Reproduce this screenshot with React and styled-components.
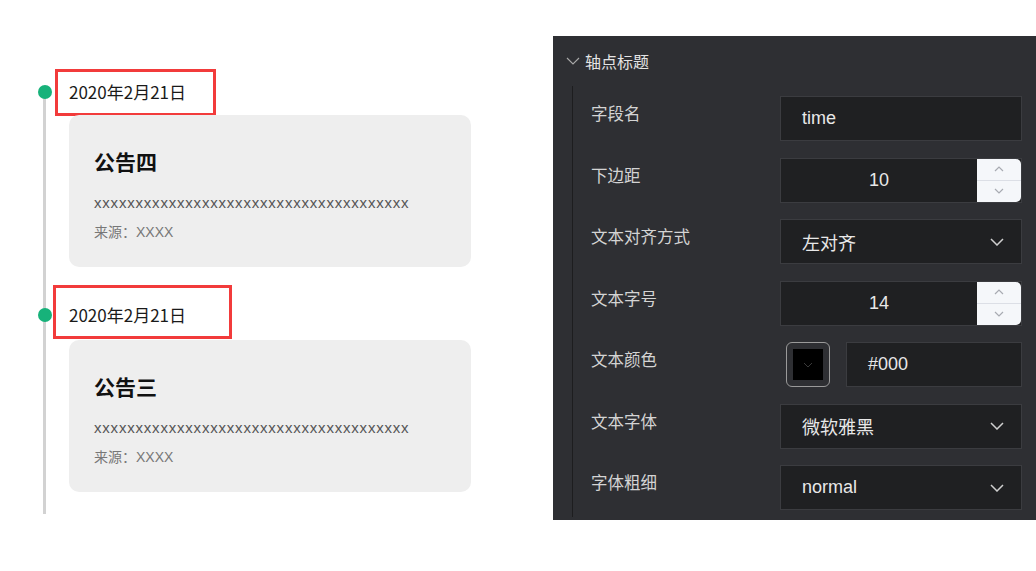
import React from 'react'
import styled, { createGlobalStyle } from 'styled-components'

const GlobalStyle = createGlobalStyle`
  body {
    margin: 0;
    background: #fff;
    font-family: "Noto Sans CJK SC", "Microsoft YaHei", sans-serif;
  }
`

const Page = styled.div`
  display: flex;
  width: 1036px;
  height: 571px;
  overflow: hidden;
`

const Timeline = styled.div`
  position: relative;
  align-self: flex-start;
  width: 515px;
  padding: 69px 0 22px 38px;
  display: flex;
  flex-direction: column;
  gap: 18px;

  &::before {
    content: '';
    position: absolute;
    left: 43px;
    top: 91px;
    bottom: 0;
    width: 3px;
    background: #d2d2d2;
  }
`

const Item = styled.div`
  display: flex;
  flex-direction: column;
`

const DateRow = styled.div`
  display: flex;
  align-items: flex-start;
`

const Dot = styled.span`
  position: relative;
  flex: none;
  width: 14px;
  height: 14px;
  border-radius: 50%;
  background: #17b27a;
  margin-top: ${(p) => p.$top}px;
`

const DateBox = styled.div`
  box-sizing: border-box;
  width: ${(p) => p.$w}px;
  height: ${(p) => p.$h}px;
  margin-left: ${(p) => p.$ml}px;
  padding: ${(p) => p.$pt}px 0 0 ${(p) => p.$pl}px;
  border: 3px solid #f23b3b;
  font-size: 17px;
  line-height: 24px;
  color: #1a1a1a;
`

const Card = styled.div`
  box-sizing: border-box;
  width: 402px;
  height: 152px;
  margin: ${(p) => p.$mt}px 0 0 31px;
  padding: 31px 25px 0;
  border-radius: 10px;
  background: #eeeeee;
`

const CardTitle = styled.div`
  font-size: 21px;
  font-weight: 700;
  line-height: 30px;
  color: #111;
`

const CardText = styled.div`
  margin-top: 17px;
  font-family: "Liberation Sans", Arial, sans-serif;
  font-size: 15px;
  letter-spacing: 0.8px;
  line-height: 20px;
  color: #555;
`

const CardSource = styled.div`
  margin-top: 9px;
  font-family: "Liberation Sans", "Noto Sans CJK SC", sans-serif;
  font-size: 14px;
  line-height: 20px;
  color: #777;
`

const Panel = styled.div`
  margin-top: 36px;
  width: 483px;
  height: 484px;
  background: #2e2f33;
  display: flex;
  flex-direction: column;
`

const PanelHeader = styled.div`
  height: 50px;
  flex: none;
  display: flex;
  align-items: center;
  gap: 5px;
  padding-left: 13px;
  font-size: 16px;
  color: #e4e4e4;
`

const PanelBody = styled.div`
  flex: 1;
  margin: 0 0 3px 19px;
  border-left: 1px solid #1d1d1f;
  padding: 10px 14px 0 18px;
  display: flex;
  flex-direction: column;
  gap: 16.5px;
`

const Row = styled.div`
  display: flex;
  align-items: flex-start;
  height: 45px;
`

const Label = styled.div`
  width: 189px;
  padding-top: 5px;
  font-size: 16.5px;
  line-height: 24px;
  color: #d4d4d4;
`

const Field = styled.div`
  box-sizing: border-box;
  display: flex;
  align-items: center;
  width: ${(p) => p.$w || 242}px;
  height: 45px;
  padding-left: ${(p) => (p.$center ? 0 : 21)}px;
  border: 1px solid #3b3c40;
  background: #1f2022;
  font-family: "Liberation Sans", "Noto Sans CJK SC", Arial, sans-serif;
  font-size: 18px;
  color: #e8e8e8;
`

const FieldValue = styled.span`
  flex: 1;
  text-align: ${(p) => (p.$center ? 'center' : 'left')};
`

const SelectValue = styled.span`
  flex: 1;
  font-family: ${(p) => (p.$cjk ? '"Noto Sans CJK SC", sans-serif' : 'inherit')};
`

const Chevron = styled.span`
  flex: none;
  margin-right: 17px;
`

const Stepper = styled.div`
  flex: none;
  align-self: stretch;
  width: 44px;
  display: flex;
  flex-direction: column;
  background: #f5f7fa;
  border-radius: 0 5px 5px 0;
`

const StepButton = styled.div`
  flex: 1;
  display: flex;
  align-items: center;
  justify-content: center;
  & + & {
    border-top: 1px solid #dcdfe6;
  }
`

const ColorRow = styled.div`
  display: flex;
  gap: 16px;
  padding-left: 6px;
`

const Swatch = styled.div`
  box-sizing: border-box;
  width: 44px;
  height: 45px;
  padding: 6px;
  border: 1px solid #9a9a9a;
  border-radius: 6px;
`

const SwatchInner = styled.div`
  height: 100%;
  background: #000;
  display: flex;
  align-items: center;
  justify-content: center;
`

const Down = ({ w = 14, h = 8, color = '#cfcfcf', sw = 1.5 }) => (
  <svg width={w} height={h} viewBox={`0 0 ${w} ${h}`} style={{ display: 'block' }}>
    <polyline points={`1,1 ${w / 2},${h - 1} ${w - 1},1`} fill="none" stroke={color} strokeWidth={sw} />
  </svg>
)

const Up = ({ w = 10, h = 6, color = '#a8abb2', sw = 1.2 }) => (
  <svg width={w} height={h} viewBox={`0 0 ${w} ${h}`} style={{ display: 'block' }}>
    <polyline points={`1,${h - 1} ${w / 2},1 ${w - 1},${h - 1}`} fill="none" stroke={color} strokeWidth={sw} />
  </svg>
)

const notices = [
  { title: '公告四', box: { w: 161, h: 47, ml: 3, pt: 8, pl: 11 }, dot: 16, mt: -1 },
  { title: '公告三', box: { w: 179, h: 54, ml: 1, pt: 15, pl: 13 }, dot: 23, mt: 1 },
]

const NumberField = ({ value }) => (
  <Field $center>
    <FieldValue $center>{value}</FieldValue>
    <Stepper>
      <StepButton><Up /></StepButton>
      <StepButton><Down w={10} h={6} color="#a8abb2" sw={1.2} /></StepButton>
    </Stepper>
  </Field>
)

const SelectField = ({ value, cjk }) => (
  <Field>
    <SelectValue $cjk={cjk}>{value}</SelectValue>
    <Chevron><Down /></Chevron>
  </Field>
)

const App = () => (
  <Page>
    <GlobalStyle />
    <Timeline>
      {notices.map((n) => (
        <Item key={n.title}>
          <DateRow>
            <Dot $top={n.dot} />
            <DateBox $w={n.box.w} $h={n.box.h} $ml={n.box.ml} $pt={n.box.pt} $pl={n.box.pl}>
              2020年2月21日
            </DateBox>
          </DateRow>
          <Card $mt={n.mt}>
            <CardTitle>{n.title}</CardTitle>
            <CardText>{'x'.repeat(38)}</CardText>
            <CardSource>来源：XXXX</CardSource>
          </Card>
        </Item>
      ))}
    </Timeline>

    <Panel>
      <PanelHeader>
        <Down w={14} h={8} color="#a9a9a9" sw={1.1} />
        轴点标题
      </PanelHeader>
      <PanelBody>
        <Row>
          <Label>字段名</Label>
          <Field><FieldValue>time</FieldValue></Field>
        </Row>
        <Row>
          <Label>下边距</Label>
          <NumberField value="10" />
        </Row>
        <Row>
          <Label>文本对齐方式</Label>
          <SelectField value="左对齐" cjk />
        </Row>
        <Row>
          <Label>文本字号</Label>
          <NumberField value="14" />
        </Row>
        <Row>
          <Label>文本颜色</Label>
          <ColorRow>
            <Swatch>
              <SwatchInner><Down w={10} h={6} color="#3a3a3a" sw={1} /></SwatchInner>
            </Swatch>
            <Field $w={176}><FieldValue>#000</FieldValue></Field>
          </ColorRow>
        </Row>
        <Row>
          <Label>文本字体</Label>
          <SelectField value="微软雅黑" cjk />
        </Row>
        <Row>
          <Label>字体粗细</Label>
          <SelectField value="normal" />
        </Row>
      </PanelBody>
    </Panel>
  </Page>
)

export default App
